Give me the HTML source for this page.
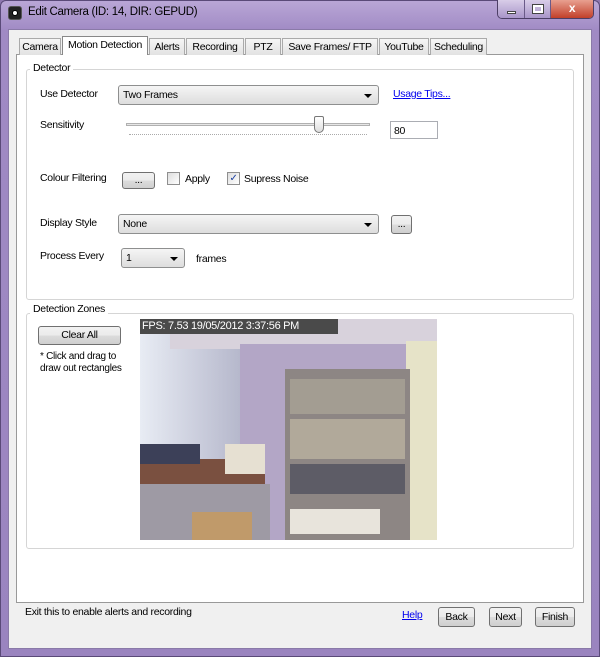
<!DOCTYPE html>
<html><head><meta charset="utf-8"><style>
*{box-sizing:border-box;margin:0;padding:0}
body{width:600px;height:657px;overflow:hidden;font-family:"Liberation Sans",sans-serif;font-size:10.5px;letter-spacing:-0.3px;color:#000;background:#8f78b0;position:relative}
.a{position:absolute}
.frame{left:0;top:0;width:600px;height:657px;background:linear-gradient(180deg,#b9a6d6 0,#a08ac4 30px,#9a84bf 100%);border:1px solid #5a4a78;border-radius:6px 6px 0 0}
.client{left:8px;top:29px;width:584px;height:620px;background:#f0f0f0;border:1px solid #8a7aa8}
.tab{top:38px;height:17px;border:1px solid #aaa;border-bottom:none;background:linear-gradient(#f6f6f6,#e2e2e2);font-size:10.5px;padding:2px 0 0;text-align:center;white-space:nowrap;overflow:hidden}
.page{left:16px;top:54px;width:568px;height:549px;background:#fff;border:1px solid #999}
.grp{border:1px solid #d5d5d5;border-radius:3px}
.lbl{background:#fff;padding:0 3px}
.combo{height:20px;border:1px solid #8e8f8f;border-radius:3px;background:linear-gradient(#f5f5f5,#ddd);padding:3px 4px}
.combo:after{content:"";position:absolute;right:6px;top:8px;border:4px solid transparent;border-top:4px solid #000;border-bottom:0}
.btn{border:1px solid #707070;border-radius:3px;background:linear-gradient(#f2f2f2,#ebebeb 50%,#dcdcdc 51%,#cfcfcf);text-align:center}
.chk{width:13px;height:13px;border:1px solid #8f8f8f;background:linear-gradient(135deg,#ddd,#fff)}
</style></head><body>
<div class="a frame"></div>
<div class="a" style="left:8px;top:6px;width:14px;height:14px;border-radius:3px;background:#222;border:1px solid #555"><div style="margin:3px;width:6px;height:6px;border-radius:50%;background:#fff;border:1px solid #000"></div></div>
<div class="a" style="left:28px;top:6px;font-size:11.5px">Edit Camera (ID: 14, DIR: GEPUD)</div>
<div class="a" style="left:497px;top:0;width:97px;height:19px;border:1px solid #4d3f66;border-top:none;border-radius:0 0 5px 5px;overflow:hidden;display:flex">
<div style="width:27px;background:linear-gradient(#d8cde8,#a995c9);border-right:1px solid #6a5a88;position:relative"><div class="a" style="left:9px;top:11px;width:9px;height:3px;background:#fff;border:1px solid #444"></div></div>
<div style="width:26px;background:linear-gradient(#d8cde8,#a995c9);border-right:1px solid #6a5a88;position:relative"><div class="a" style="left:8px;top:5px;width:10px;height:8px;border:2px solid #fff;outline:1px solid #444"></div></div>
<div style="flex:1;background:linear-gradient(#e8a090,#c2402a);color:#fff;font-weight:bold;text-align:center;font-size:12px;line-height:17px">x</div></div>
<div class="a client"></div>
<div class="a page"></div>
<div class="a tab" style="left:19px;width:42px">Camera</div>
<div class="a tab" style="left:62px;top:36px;height:19px;width:86px;background:#fff;border-color:#888">Motion Detection</div>
<div class="a tab" style="left:149px;width:36px">Alerts</div>
<div class="a tab" style="left:186px;width:58px">Recording</div>
<div class="a tab" style="left:245px;width:36px">PTZ</div>
<div class="a tab" style="left:282px;width:96px">Save Frames/ FTP</div>
<div class="a tab" style="left:379px;width:50px">YouTube</div>
<div class="a tab" style="left:430px;width:57px">Scheduling</div>

<div class="a grp" style="left:26px;top:69px;width:548px;height:231px"></div>
<div class="a lbl" style="left:30px;top:62px">Detector</div>
<div class="a" style="left:40px;top:88px">Use Detector</div>
<div class="a combo" style="left:118px;top:85px;width:261px">Two Frames</div>
<div class="a" style="left:393px;top:88px;color:#0000ee;text-decoration:underline">Usage Tips...</div>
<div class="a" style="left:40px;top:119px">Sensitivity</div>
<div class="a" style="left:126px;top:123px;width:244px;height:3px;border:1px solid #b0b0b0;background:#e6e6e6"></div>
<div class="a" style="left:129px;top:134px;width:238px;height:2px;border-top:1px dotted #aaa"></div>
<div class="a" style="left:314px;top:116px;width:10px;height:17px;border:1px solid #777;border-radius:2px 2px 5px 5px;background:linear-gradient(#fff,#ddd)"></div>
<div class="a" style="left:390px;top:121px;width:48px;height:18px;border:1px solid #abadb3;background:#fff;padding:3px 3px">80</div>
<div class="a" style="left:40px;top:172px">Colour Filtering</div>
<div class="a btn" style="left:122px;top:172px;width:33px;height:17px;line-height:14px">...</div>
<div class="a chk" style="left:167px;top:172px"></div>
<div class="a" style="left:185px;top:173px">Apply</div>
<div class="a chk" style="left:227px;top:172px;font-size:10px;line-height:11px;text-align:center;color:#1a3fa0">✓</div>
<div class="a" style="left:244px;top:173px">Supress Noise</div>
<div class="a" style="left:40px;top:217px">Display Style</div>
<div class="a combo" style="left:118px;top:214px;width:261px">None</div>
<div class="a btn" style="left:391px;top:215px;width:21px;height:19px;line-height:16px">...</div>
<div class="a" style="left:40px;top:250px">Process Every</div>
<div class="a combo" style="left:121px;top:248px;width:64px">1</div>
<div class="a" style="left:196px;top:253px">frames</div>

<div class="a grp" style="left:26px;top:313px;width:548px;height:236px"></div>
<div class="a lbl" style="left:30px;top:303px">Detection Zones</div>
<div class="a btn" style="left:38px;top:326px;width:83px;height:19px;line-height:17px">Clear All</div>
<div class="a" style="left:40px;top:351px;line-height:12px;font-size:10px">* Click and drag to<br>draw out rectangles</div>

<div class="a" style="left:140px;top:319px;width:297px;height:221px;overflow:hidden;background:#b8acc8">
<div class="a" style="left:0;top:0;width:100px;height:221px;background:linear-gradient(90deg,#e8ecf4,#b6b8cc)"></div>
<div class="a" style="left:30px;top:0;width:267px;height:30px;background:#d8d2dc"></div>
<div class="a" style="left:100px;top:25px;width:167px;height:196px;background:#b3a6c6"></div>
<div class="a" style="left:266px;top:22px;width:31px;height:199px;background:#e6e3c8"></div>
<div class="a" style="left:145px;top:50px;width:125px;height:171px;background:#8d8684"></div>
<div class="a" style="left:150px;top:60px;width:115px;height:35px;background:#a39d92"></div>
<div class="a" style="left:150px;top:100px;width:115px;height:40px;background:#b1a99a"></div>
<div class="a" style="left:150px;top:145px;width:115px;height:30px;background:#5d5c66"></div>
<div class="a" style="left:150px;top:190px;width:90px;height:25px;background:#e8e4dc"></div>
<div class="a" style="left:0;top:140px;width:125px;height:25px;background:#7a5040"></div>
<div class="a" style="left:0;top:125px;width:60px;height:20px;background:#3c4058"></div>
<div class="a" style="left:85px;top:125px;width:40px;height:30px;background:#e6e0d2"></div>
<div class="a" style="left:0;top:165px;width:130px;height:56px;background:#9e9aa4"></div>
<div class="a" style="left:52px;top:193px;width:60px;height:28px;background:#c09a6a"></div>
<div class="a" style="left:0;top:0;width:198px;height:15px;background:#4a4a4a;color:#fff;font-size:11px;padding:1px 2px;white-space:nowrap">FPS: 7.53 19/05/2012 3:37:56 PM</div>
</div>

<div class="a" style="left:25px;top:606px">Exit this to enable alerts and recording</div>
<div class="a" style="left:402px;top:609px;color:#0000ee;text-decoration:underline">Help</div>
<div class="a btn" style="left:438px;top:607px;width:37px;height:20px;line-height:18px">Back</div>
<div class="a btn" style="left:489px;top:607px;width:33px;height:20px;line-height:18px">Next</div>
<div class="a btn" style="left:535px;top:607px;width:40px;height:20px;line-height:18px">Finish</div>
</body></html>
